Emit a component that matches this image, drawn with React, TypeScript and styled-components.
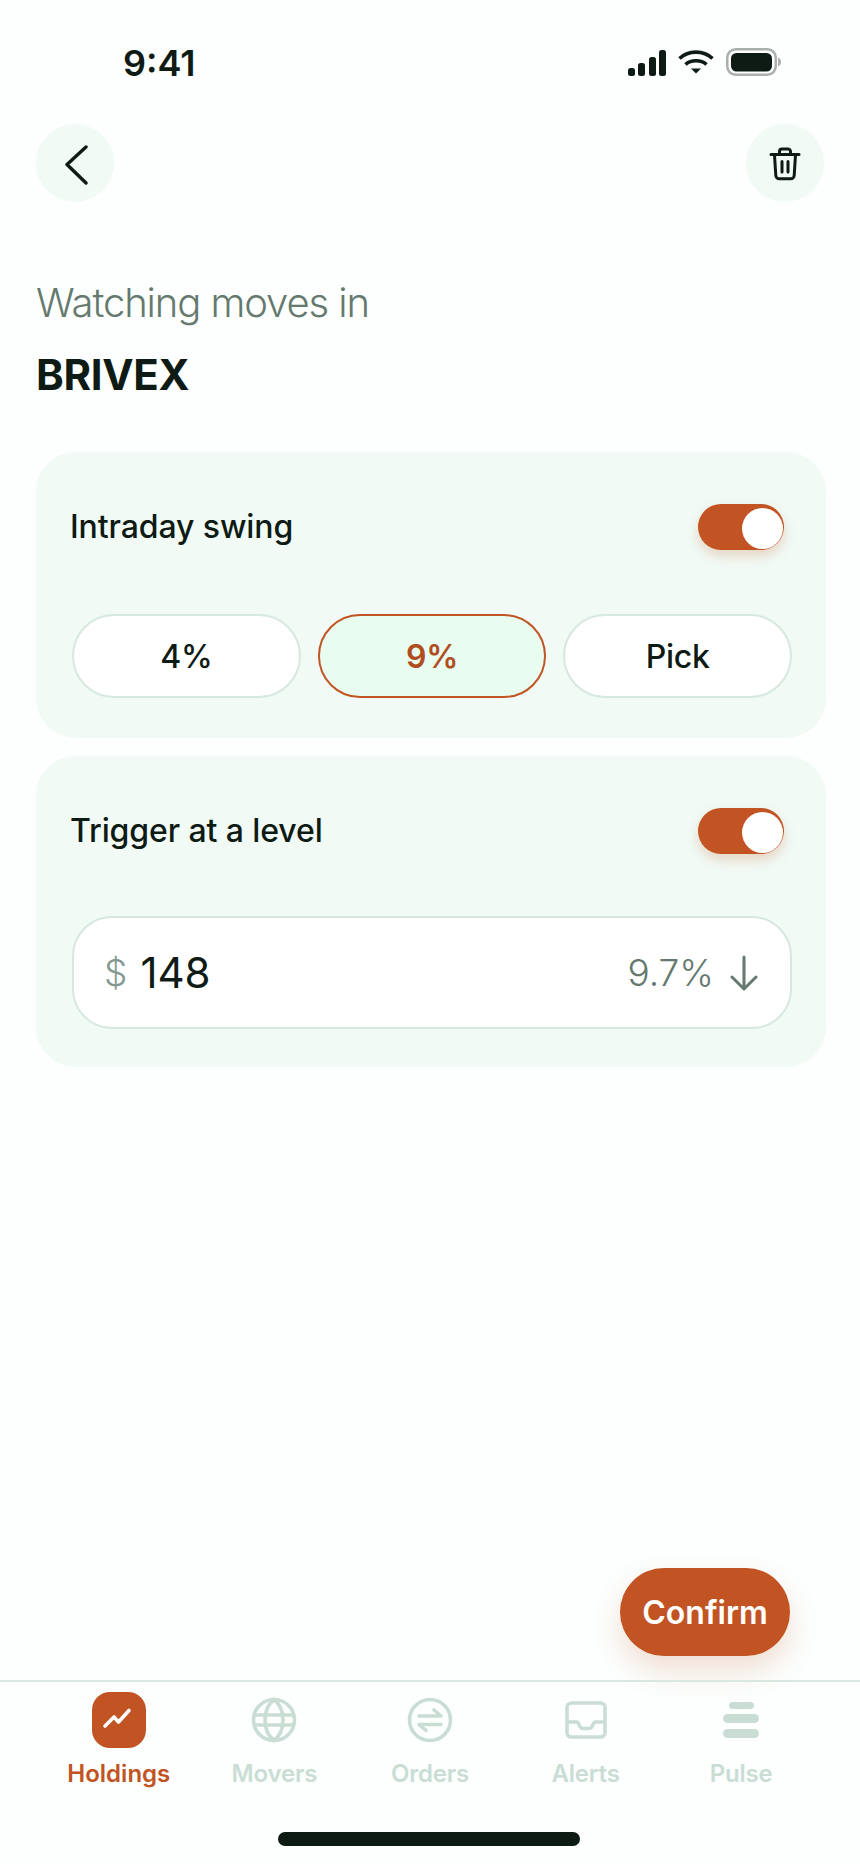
import React from 'react';
import styled, { createGlobalStyle } from 'styled-components';

const ink = '#0E1A14';
const muted = '#65796F';
const accent = '#C25322';
const line = '#D6E8E0';
const faded = '#CADDD4';
const panel = '#F1FAF5';
const page = '#FCFFFE';

const GlobalStyle = createGlobalStyle`
    html, body {
        margin: 0;
        padding: 0;
        background: ${page};
    }
    * {
        box-sizing: border-box;
    }
`;

const Screen = styled.div`
    width: 860px;
    height: 1864px;
    display: flex;
    flex-direction: column;
    background: ${page};
    color: ${ink};
    font-family: Inter, "Noto Sans", sans-serif;
    overflow: hidden;
`;

const StatusBar = styled.div`
    height: 124px;
    padding: 42px 79px 0 123px;
    display: flex;
    justify-content: space-between;
    align-items: flex-start;
`;
const Clock = styled.div`
    font-size: 36px;
    line-height: 42px;
    font-weight: 600;
`;
const StatusIcons = styled.div`
    display: flex;
    align-items: flex-start;
    margin-top: 8px;
`;

const Header = styled.div`
    padding: 0 36px;
    display: flex;
    justify-content: space-between;
`;
const RoundButton = styled.button`
    width: 78px;
    height: 78px;
    padding: 0;
    border: 0;
    border-radius: 50%;
    background: ${panel};
    color: ${ink};
    display: flex;
    align-items: center;
    justify-content: center;
`;

const Title = styled.div`
    padding: 78px 36px 54px;
`;
const Lead = styled.div`
    font-size: 40px;
    line-height: 46px;
    font-weight: 300;
    letter-spacing: -1.1px;
    color: ${muted};
`;
const Name = styled.div`
    margin-top: 26px;
    font-size: 42px;
    line-height: 46px;
    font-weight: 700;
    letter-spacing: -0.3px;
`;

const Cards = styled.div`
    padding: 0 34px 0 36px;
    display: flex;
    flex-direction: column;
    gap: 18px;
`;
const Card = styled.div<{ $bottom: number }>`
    padding: 52px 34px ${(p) => p.$bottom}px 36px;
    background: ${panel};
    border-radius: 40px;
`;
const CardHead = styled.div`
    display: flex;
    align-items: center;
    justify-content: space-between;
    height: 46px;
`;
const CardTitle = styled.div`
    margin-left: -2px;
    font-size: 32px;
    line-height: 38px;
    font-weight: 500;
    letter-spacing: -0.1px;
`;
const Toggle = styled.div`
    width: 86px;
    height: 46px;
    margin-right: 8px;
    padding: 4px 1px 0 0;
    display: flex;
    justify-content: flex-end;
    border-radius: 23px;
    background: ${accent};
    box-shadow: 0 6px 12px rgba(194, 83, 34, 0.22);
`;
const Knob = styled.div`
    width: 41px;
    height: 41px;
    border-radius: 50%;
    background: #fff;
`;

const Pills = styled.div`
    margin-top: 64px;
    display: flex;
    gap: 17px;
`;
const Pill = styled.div<{ $active?: boolean }>`
    flex: 1;
    height: 84px;
    display: flex;
    align-items: center;
    justify-content: center;
    border-radius: 42px;
    border: 2px solid ${(p) => (p.$active ? accent : line)};
    background: ${(p) => (p.$active ? '#E8FDF0' : '#FFFFFF')};
    color: ${(p) => (p.$active ? '#B04E22' : ink)};
    font-size: 32px;
    letter-spacing: -0.3px;
    font-weight: ${(p) => (p.$active ? 600 : 500)};
`;

const Level = styled.div`
    margin-top: 62px;
    height: 113px;
    padding: 0 31px 0 30px;
    display: flex;
    align-items: center;
    border-radius: 40px;
    border: 2px solid ${line};
    background: #fff;
`;
const Dollar = styled.span`
    font-size: 37px;
    font-weight: 300;
    color: #84998F;
`;
const Amount = styled.span`
    margin-left: 13px;
    font-size: 42px;
    font-weight: 400;
`;
const Drop = styled.span`
    margin-left: auto;
    margin-right: 15px;
    font-size: 37px;
    font-weight: 300;
    color: ${muted};
`;

const Confirm = styled.button`
    margin: auto 70px 24px auto;
    width: 170px;
    height: 88px;
    padding: 0;
    border: 0;
    border-radius: 44px;
    background: ${accent};
    color: #fff;
    font-family: inherit;
    font-size: 32px;
    font-weight: 600;
    box-shadow: 0 14px 30px rgba(194, 83, 34, 0.2);
`;

const Nav = styled.div`
    height: 184px;
    padding: 10px 41px 0;
    border-top: 2px solid ${line};
    display: flex;
    flex-direction: column;
`;
const Tabs = styled.div`
    display: flex;
`;
const Tab = styled.div<{ $active?: boolean }>`
    flex: 1;
    display: flex;
    flex-direction: column;
    align-items: center;
    color: ${(p) => (p.$active ? accent : faded)};
    font-size: 24px;
    line-height: 30px;
    font-weight: 600;
    letter-spacing: ${(p) => (p.$active ? 0 : -0.2)}px;
`;
const TabIcon = styled.div`
    height: 56px;
    margin-bottom: 11px;
    display: flex;
    align-items: center;
    justify-content: center;
`;
const ActiveBadge = styled.div`
    width: 54px;
    height: 56px;
    border-radius: 18px;
    background: ${accent};
    display: flex;
    align-items: center;
    justify-content: center;
`;
const HomeBar = styled.div`
    width: 302px;
    height: 14px;
    margin: 43px auto 0;
    transform: translateX(-1px);
    border-radius: 7px;
    background: ${ink};
`;

const SignalIcon = () => (
    <svg width="38" height="26" viewBox="0 0 38 26" fill={ink}>
        <rect x="0" y="18" width="7" height="8" rx="2.5" />
        <rect x="10" y="13" width="7" height="13" rx="2.5" />
        <rect x="21" y="7" width="7" height="19" rx="2.5" />
        <rect x="31" y="0" width="7" height="26" rx="2.5" />
    </svg>
);

const WifiIcon = () => (
    <svg width="36" height="24" viewBox="0 0 36 24" fill="none" stroke={ink} strokeWidth="3.6" style={{ marginLeft: 12 }}>
        <path d="M1.5 8.5C10.5 0 25.5 0 34.5 8.5" />
        <path d="M7.5 14.5C13 9.5 23 9.5 28.5 14.5" />
        <path d="M13 18.5h10l-5 5z" fill={ink} stroke="none" />
    </svg>
);

const BatteryIcon = () => (
    <svg width="55" height="28" viewBox="0 0 55 28" fill="none" style={{ marginLeft: 12, marginTop: -2 }}>
        <rect x="1.25" y="1.25" width="48.5" height="25.5" rx="8.5" stroke="#A9B0AC" strokeWidth="2.5" />
        <rect x="5" y="5" width="41" height="18.5" rx="5.5" fill={ink} />
        <path d="M52 9.5c2 .5 3 2.5 3 4.5s-1 4-3 4.500z" fill="#A9B0AC" />
    </svg>
);

const BackIcon = () => (
    <svg width="24" height="40" viewBox="0 0 24 40" fill="none" stroke="currentColor" strokeWidth="3.4" strokeLinecap="round" strokeLinejoin="round" style={{ margin: '3px 0 0 3px' }}>
        <path d="M21 2L2 19.5 21 38" />
    </svg>
);

const TrashIcon = () => (
    <svg width="32" height="34" viewBox="0 0 32 34" fill="none" stroke="currentColor" strokeWidth="3" strokeLinecap="round" strokeLinejoin="round" style={{ marginTop: 1 }}>
        <path d="M2 7.5h28" />
        <path d="M10.5 7V4.5a2.5 2.5 0 0 1 2.5-2.5h6a2.500 2.500 0 0 1 2.500 2.500V7" />
        <path d="M5.5 8l1.3 20.5a3.500 3.500 0 0 0 3.500 3.300h11.400a3.500 3.500 0 0 0 3.500-3.300L26.500 8" />
        <path d="M13 14.500v10.500M19 14.500v10.500" />
    </svg>
);

const DownArrow = () => (
    <svg width="30" height="36" viewBox="0 0 30 36" fill="none" stroke={muted} strokeWidth="3" strokeLinecap="round" strokeLinejoin="round">
        <path d="M15 2v32M3 22l12 12 12-12" />
    </svg>
);

const ChartIcon = () => (
    <svg width="54" height="56" viewBox="0 0 54 56" fill="none" stroke="#fff" strokeWidth="3.6" strokeLinecap="round" strokeLinejoin="round">
        <path d="M13 34l9-9 4.500 5L37 18.500" />
    </svg>
);

const GlobeIcon = () => (
    <svg width="46" height="46" viewBox="0 0 46 46" fill="none" stroke={faded} strokeWidth="3.6">
        <circle cx="23" cy="23" r="20.500" />
        <path d="M23 2.500C11 12 11 34 23 43.500C35 34 35 12 23 2.500z" />
        <path d="M3.500 18h39M3.500 28h39" />
    </svg>
);

const SwapIcon = () => (
    <svg width="46" height="46" viewBox="0 0 46 46" fill="none" stroke={faded} strokeWidth="3.6" strokeLinecap="round" strokeLinejoin="round">
        <circle cx="23" cy="23" r="20.500" />
        <path d="M12 19h22l-7-6" />
        <path d="M34 27.500H12l7 6" />
    </svg>
);

const InboxIcon = () => (
    <svg width="42" height="38" viewBox="0 0 42 38" fill="none" stroke={faded} strokeWidth="3.6" strokeLinejoin="round">
        <rect x="2" y="2" width="38" height="34" rx="4.500" />
        <path d="M2 21h10c2 0 2 6 5.500 6.500h7c3.500-.5 3.500-6.500 5.500-6.500h10" />
    </svg>
);

const StackIcon = () => (
    <svg width="36" height="36" viewBox="0 0 36 36" fill={faded}>
        <rect x="6" y="0" width="25" height="7" rx="3.500" />
        <rect x="0" y="12" width="36" height="9" rx="4.500" />
        <rect x="0" y="27" width="36" height="9" rx="4.500" />
    </svg>
);

const App = () => {
    return (
        <Screen>
            <GlobalStyle />
            <StatusBar>
                <Clock>9:41</Clock>
                <StatusIcons>
                    <SignalIcon />
                    <WifiIcon />
                    <BatteryIcon />
                </StatusIcons>
            </StatusBar>
            <Header>
                <RoundButton><BackIcon /></RoundButton>
                <RoundButton><TrashIcon /></RoundButton>
            </Header>
            <Title>
                <Lead>Watching moves in</Lead>
                <Name>BRIVEX</Name>
            </Title>
            <Cards>
                <Card $bottom={40}>
                    <CardHead>
                        <CardTitle>Intraday swing</CardTitle>
                        <Toggle><Knob /></Toggle>
                    </CardHead>
                    <Pills>
                        <Pill>4%</Pill>
                        <Pill $active>9%</Pill>
                        <Pill>Pick</Pill>
                    </Pills>
                </Card>
                <Card $bottom={38}>
                    <CardHead>
                        <CardTitle>Trigger at a level</CardTitle>
                        <Toggle><Knob /></Toggle>
                    </CardHead>
                    <Level>
                        <Dollar>$</Dollar>
                        <Amount>148</Amount>
                        <Drop>9.7%</Drop>
                        <DownArrow />
                    </Level>
                </Card>
            </Cards>
            <Confirm>Confirm</Confirm>
            <Nav>
                <Tabs>
                    <Tab $active>
                        <TabIcon><ActiveBadge><ChartIcon /></ActiveBadge></TabIcon>
                        Holdings
                    </Tab>
                    <Tab>
                        <TabIcon><GlobeIcon /></TabIcon>
                        Movers
                    </Tab>
                    <Tab>
                        <TabIcon><SwapIcon /></TabIcon>
                        Orders
                    </Tab>
                    <Tab>
                        <TabIcon><InboxIcon /></TabIcon>
                        Alerts
                    </Tab>
                    <Tab>
                        <TabIcon><StackIcon /></TabIcon>
                        Pulse
                    </Tab>
                </Tabs>
                <HomeBar />
            </Nav>
        </Screen>
    );
};

export default App;
